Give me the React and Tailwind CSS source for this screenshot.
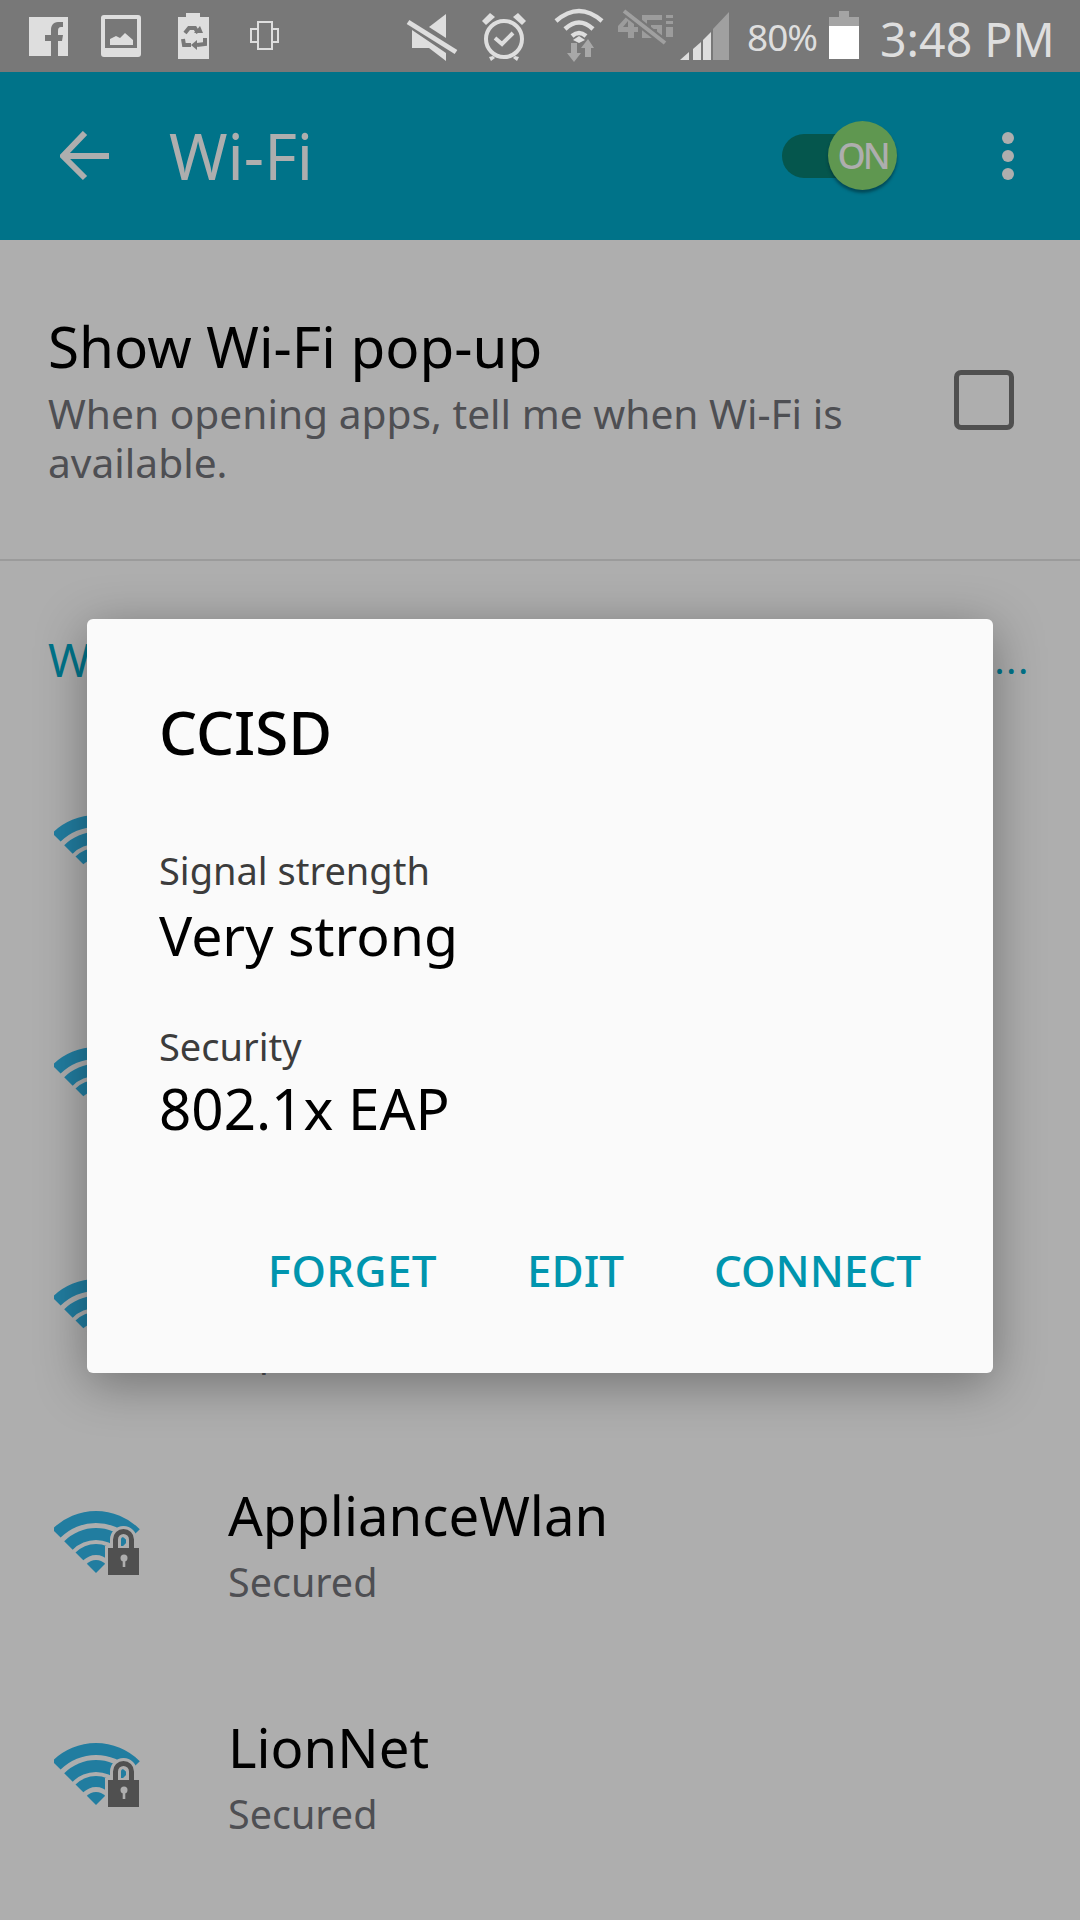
const F = { fontFamily: '"Noto Sans", sans-serif' };

function Wifi() {
  return (
    <svg width="88" height="66" viewBox="0 0 88 66" className="block">
      <g fill="#217da0">
        <path d="M-1.800 18.200A62 62 0 0 1 85.800 18.200L77.400 26.600A50 50 0 0 0 6.600 26.600Z" />
        <path d="M10.200 30.200A45 45 0 0 1 73.800 30.200L65.300 38.700A33 33 0 0 0 18.700 38.700Z" />
        <path d="M21.500 41.500A29 29 0 0 1 62.500 41.500L54.700 49.300A18 18 0 0 0 29.300 49.300Z" />
        <path d="M32.800 52.800A13 13 0 0 1 51.200 52.800L42 62Z" />
      </g>
      <path d="M61.500 38V28.500A8 8 0 0 1 77.500 28.500V38" fill="none" stroke="#aeaeae" strokeWidth="11" />
      <rect x="51" y="35" width="37" height="31" fill="#aeaeae" />
      <path d="M61.500 38V28.500A8 8 0 0 1 77.500 28.500V38" fill="none" stroke="#505050" strokeWidth="5" />
      <rect x="54" y="37" width="31" height="27" fill="#505050" />
      <circle cx="70" cy="47" r="3.500" fill="#aeaeae" />
      <rect x="68.700" y="47" width="2.600" height="9" fill="#aeaeae" />
    </svg>
  );
}

function Network({ name, sub }) {
  return (
    <div className="flex h-[232px] items-center pl-[54px]">
      <div className="w-[174px] shrink-0 pt-[2px]"><Wifi /></div>
      <div className="mt-[3px] flex flex-col">
        <div className="h-[66px] text-[54.5px] leading-[66px] text-black">{name}</div>
        <div className="mt-[9px] h-[50px] text-[39.5px] leading-[50px] text-[#4e4f53]">{sub}</div>
      </div>
    </div>
  );
}

function StatusIcons() {
  return (
    <div className="relative h-[72px] overflow-hidden bg-[#787878]">
      <svg width="1080" height="72" viewBox="0 0 1080 72" className="block">
        <g fill="#dedede">
          {/* facebook */}
          <path d="M29 17H68V56H58V41H62L63 35H58V31C58 28 59 27 61 27H63V22H58C53 22 51 26 51 30V35H45V41H51V56H29Z" />
          {/* gallery */}
          <path fillRule="evenodd" d="M104 15H138Q141 15 141 18V54Q141 57 138 57H104Q101 57 101 54V18Q101 15 104 15ZM105 19V48H137V19Z" />
          <path d="M110 45V39L116 36L120 38L125 33L133 40V45Z" />
          {/* battery recycle */}
          <path d="M178 17H186V13H200V17H209V59H178Z" />
          {/* mute */}
          <path d="M446 14V38L429 27Z" />
          <path d="M412 30L446 53V61L429 48H412Z" />
          <path d="M408 22L456 52" stroke="#dedede" strokeWidth="5" fill="none" />
          {/* alarm ears and feet */}
          <path d="M482 21L490 13L495 17L486 25ZM526 21L518 13L513 17L522 25Z" />
          <path d="M489 57l4 -1 2 2 -4 3zM519 57l-4 -1 -2 2 4 3z" />
          {/* wifi apex */}
          <path d="M579 36L585 40L579 43L573 40Z" />
        </g>
        {/* recycle arrows */}
        <g fill="none" stroke="#787878" strokeWidth="4">
          <path d="M185 33L189 28H195L198 33" />
          <path d="M183 39L184 45H191" />
          <path d="M205 38V44L197 45" />
        </g>
        <g fill="#787878">
          <path d="M194 33H203L200 26Z" />
          <path d="M197 40V50L191 45Z" />
        </g>
        {/* multi window */}
        <g fill="none" stroke="#dedede" strokeWidth="2">
          <rect x="258" y="22" width="14" height="27" />
          <path d="M258 29H251V42H258M272 29H278V42H272" />
        </g>
        {/* alarm */}
        <circle cx="504" cy="39" r="18" fill="none" stroke="#dedede" strokeWidth="4" />
        <path d="M495 38L502 44L513 33" fill="none" stroke="#dedede" strokeWidth="4" />
        {/* wifi */}
        <g fill="none" stroke="#dedede" strokeWidth="4.500">
          <path d="M556 21Q579 1 602 21" />
          <path d="M565 29Q579 16 593 29" />
          <path d="M572 36Q579 30 586 36" />
        </g>
        <g fill="#a8a8a8">
          <path d="M571 43H577V53H581L574 62L567 53H571Z" />
          <path d="M588 39L594 48H591V57H585V48H581Z" />
        </g>
        {/* 4G disabled */}
        <g fill="#9c9c9c">
          <path fillRule="evenodd" d="M628 15H634V27H638V32H634V38H628V32H618V26ZM628 27V21L623 27Z" />
          <path d="M642 15H662V20H647V33H657V29H651V25H662V38H642Z" />
          <path d="M666 15H673V18H666ZM666 21H673V24H666ZM666 27H673V37H666Z" />
        </g>
        <path d="M624 11L665 43" stroke="#787878" strokeWidth="8" fill="none" />
        <path d="M624 11L665 43" stroke="#a0a0a0" strokeWidth="4" fill="none" />
        {/* signal */}
        <path d="M680 60L689 52V60Z" fill="#dedede" />
        <path d="M693 49L701 42V60H693Z" fill="#dedede" />
        <path d="M703 40L711 32V60H703Z" fill="#dedede" />
        <path d="M713 29L729 12V60H713Z" fill="#a0a0a0" />
        {/* battery */}
        <path d="M829 17H839V11H849V17H859V26H829Z" fill="#a4a4a4" />
        <rect x="829" y="26" width="30" height="33" fill="#ffffff" />
      </svg>
      <div className="absolute left-[747px] top-[15px] text-[37px] leading-[44px] tracking-[-1px] text-[#dedede]">80%</div>
      <div className="absolute left-[880px] top-[12px] text-[46.5px] leading-[54px] text-[#dedede]">3:48 PM</div>
    </div>
  );
}

export default function App() {
  return (
    <div style={F} className="relative h-[1920px] w-[1080px] overflow-hidden bg-[#aeaeae]">
      <StatusIcons />
      <div className="flex h-[168px] items-center bg-[#007389]">
        <svg width="52" height="50" viewBox="0 0 52 50" className="ml-[60px] shrink-0">
          <path d="M2 25H49M25 2L3 25L25 47" fill="none" stroke="#aeaeae" strokeWidth="6" />
        </svg>
        <div className="ml-[57px] text-[63px] leading-[70px] text-[#aeaeae]">Wi-Fi</div>
        <div className="relative ml-auto mr-[105px] h-[44px] w-[115px]">
          <div className="h-[44px] w-[88px] rounded-full bg-[#05564d]" />
          <div className="absolute left-[46px] top-[-13px] flex h-[69px] w-[69px] items-center justify-center rounded-full bg-[#5f9750] text-[36px] font-medium leading-none tracking-[-3px] text-[#aeaeae] shadow-[0_3px_3px_rgba(0,40,50,0.55)]">ON</div>
        </div>
        <div className="mr-[66px] flex flex-col gap-[6px]">
          <div className="h-[12px] w-[12px] rounded-full bg-[#aeaeae]" />
          <div className="h-[12px] w-[12px] rounded-full bg-[#aeaeae]" />
          <div className="h-[12px] w-[12px] rounded-full bg-[#aeaeae]" />
        </div>
      </div>

      <div className="flex h-[321px] items-center border-b-2 border-[#9b9b9b] pl-[48px] pr-[66px]">
        <div className="flex-1">
          <div className="text-[56.6px] leading-[66px] text-black">Show Wi-Fi pop-up</div>
          <div className="mt-[10px] w-[860px] text-[40.7px] leading-[49px] text-[#4e4f53]">When opening apps, tell me when Wi-Fi is available.</div>
        </div>
        <div className="h-[60px] w-[60px] rounded-[7px] border-[5px] border-[#505050]" />
      </div>

      <div className="flex h-[170px] items-start justify-between pl-[48px] pr-[50px] pt-[73px]">
        <span className="text-[46px] leading-[50px] text-[#007389]">W</span>
        <span className="text-[39px] leading-[50px] tracking-[1.5px] text-[#007389]">...</span>
      </div>

      <Network />
      <Network />
      <Network sub="Open" />
      <Network name="ApplianceWlan" sub="Secured" />
      <Network name="LionNet" sub="Secured" />

      <div className="absolute left-[87px] top-[619px] h-[754px] w-[906px] rounded-[6px] bg-[#fafafa] shadow-[0_10px_50px_rgba(0,0,0,0.35)]">
        <div className="pl-[72px] pt-[78px]">
          <div className="text-[60px] font-medium leading-[70px] text-black">CCISD</div>
          <div className="mt-[78px] text-[38px] leading-[50px] text-[#3c3c3c]">Signal strength</div>
          <div className="mt-[5px] text-[55.4px] leading-[70px] text-black">Very strong</div>
          <div className="mt-[51px] text-[38px] leading-[50px] text-[#3c3c3c]">Security</div>
          <div className="mt-[3px] text-[56.5px] leading-[70px] text-black">802.1x EAP</div>
        </div>
        <div className="absolute bottom-[78px] right-[72px] flex gap-[90px] text-[44px] font-medium leading-[50px] text-[#0095ae]">
          <span className="tracking-[0.4px]">FORGET</span>
          <span>EDIT</span>
          <span>CONNECT</span>
        </div>
      </div>
    </div>
  );
}
